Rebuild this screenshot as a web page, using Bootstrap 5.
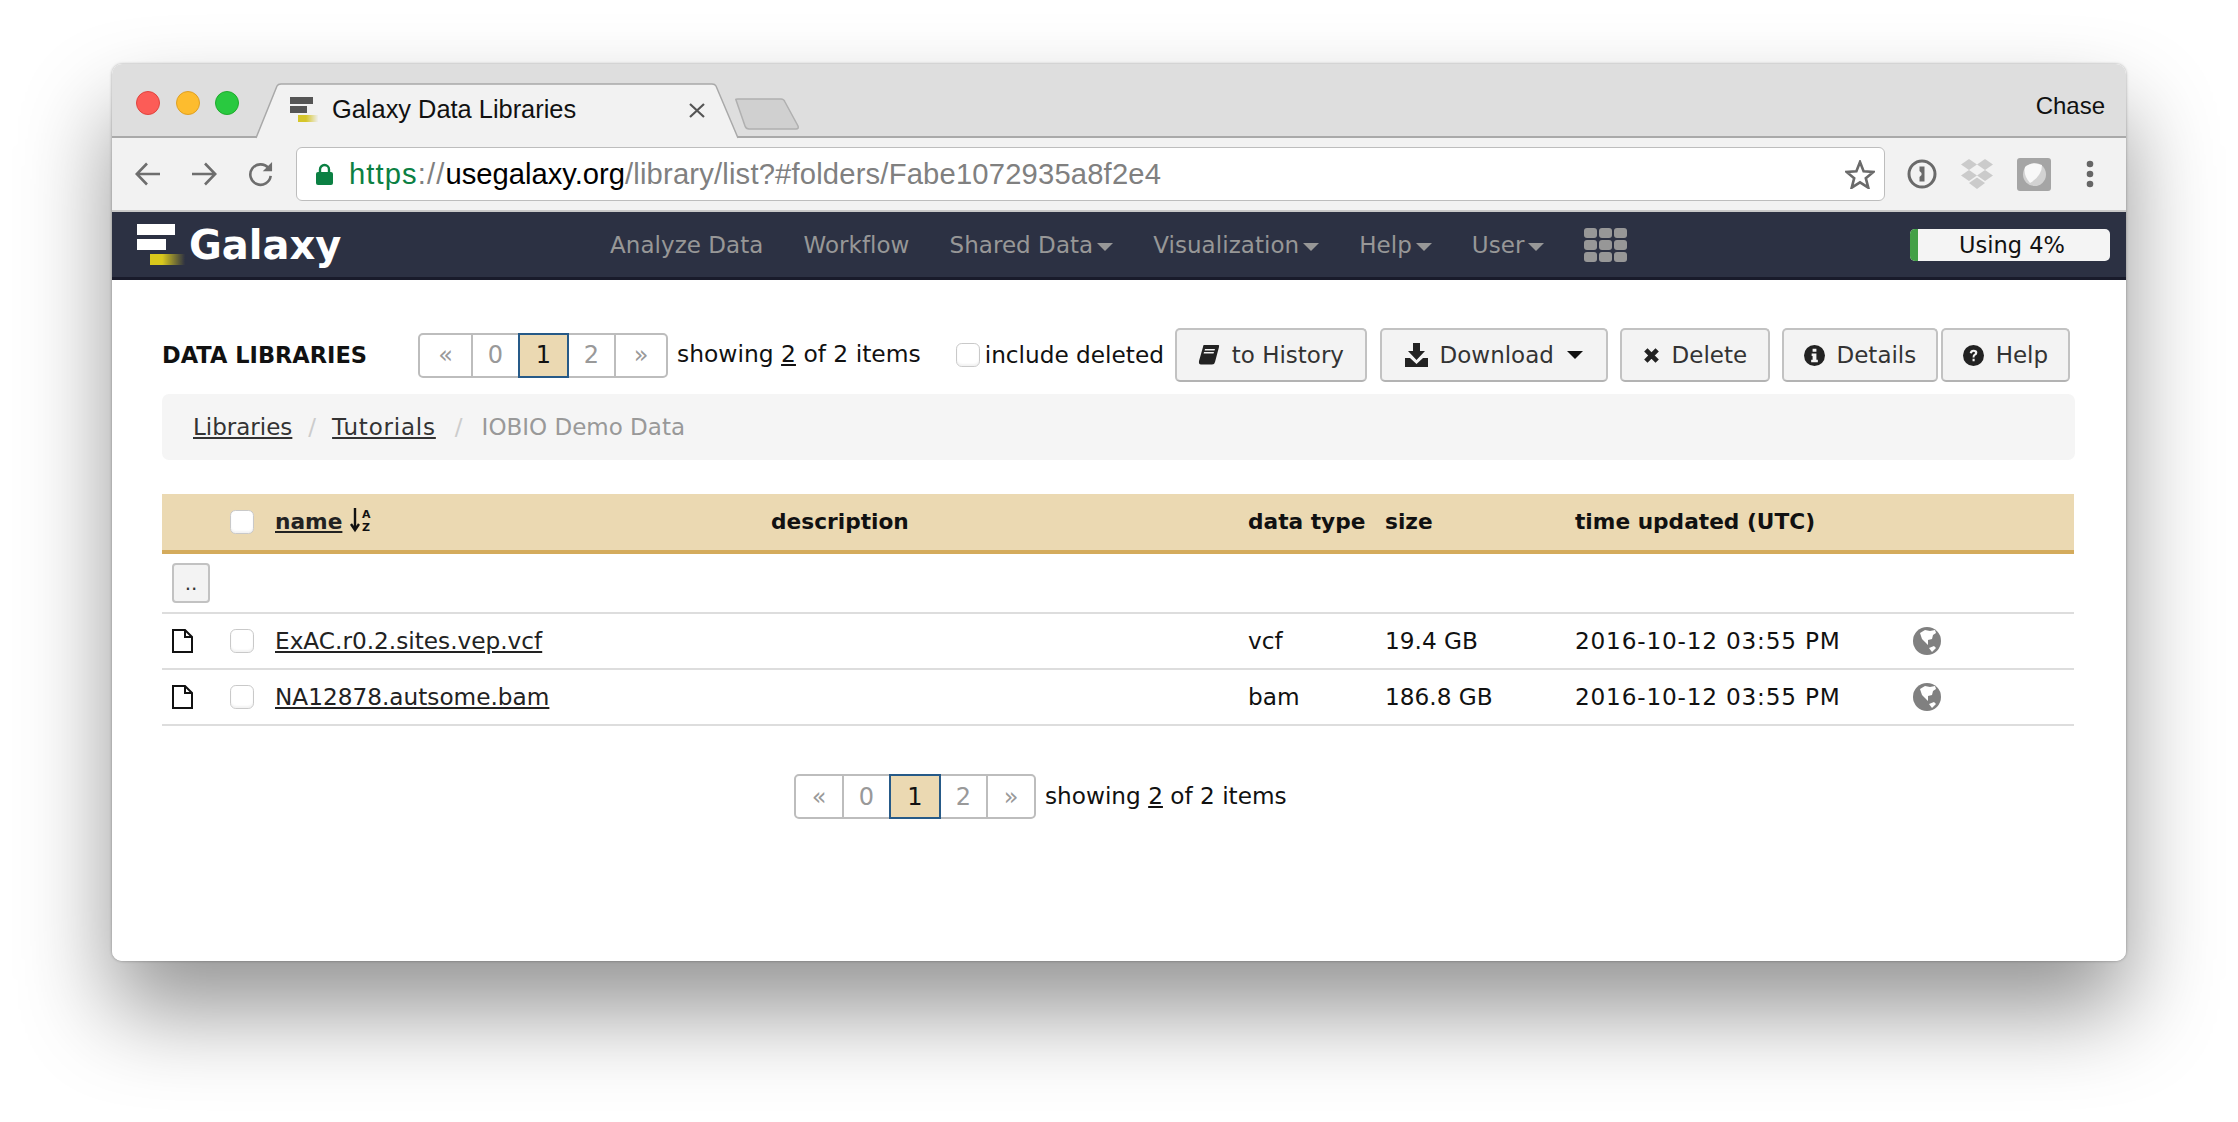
<!doctype html>
<html lang="en">
<head>
<meta charset="utf-8">
<title>Galaxy Data Libraries</title>
<link href="https://cdn.jsdelivr.net/npm/bootstrap@5.3.0/dist/css/bootstrap.min.css" rel="stylesheet">
<style>
html,body{background:#fff;margin:0;height:1122px;overflow:hidden}
body{padding:64px 0 0 112px;font-family:"DejaVu Sans",sans-serif;font-size:23.2px;color:#111}
.app-win{width:2014px;height:897px;border-radius:10px;background:#fff;overflow:hidden;display:flex;flex-direction:column}
.win-shadow{width:2014px;height:897px;border-radius:10px;box-shadow:0 50px 90px rgba(0,0,0,.42),0 0 3px rgba(0,0,0,.35)}
.tabbar{height:74px;background:#dedede;border-bottom:2px solid #a9a9a9;font-family:"Liberation Sans",sans-serif;flex:none}
.lights{gap:15.5px;padding:27px 0 0 24px;width:144px;align-self:flex-start}
.light{width:24px;height:24px;border-radius:50%;display:block}
.l-r{background:#fc5c57;border:1px solid #e0443e}.l-y{background:#fdbc2e;border:1px solid #dfa023}.l-g{background:#29c940;border:1px solid #1fab2d}
.tab-item{width:483px;height:55px;margin-top:19px;position:relative;margin-left:0;padding:0 0 2px 34px}
.tab-shape{position:absolute;left:0;top:0;width:483px;height:56px}
.tab-fav,.tab-name,.tab-close{position:relative}
.tab-name{font-size:25.4px;color:#111;margin-left:14px;width:356px;white-space:nowrap}
.tab-close{font-size:25px;color:#555;line-height:1}
.new-tab{margin:34px 0 0 -5px;width:66px;height:32px}
.who{font-size:24px;color:#111;margin:24px 21px 0 auto}
.urlbar{height:74px;background:#f2f2f2;border-bottom:2px solid #c9c9c9;padding:10px 0 10px 23px;flex:none}
.nav-ic{width:26px;height:26px;margin-right:30px;flex:none}
.omni{width:1589px;height:54px;margin-left:-7px;background:#fff;border:1.5px solid #bdbdbd;border-radius:6px;padding:0 9px 0 19px;font-family:"Liberation Sans",sans-serif;font-size:29.2px;color:#808080;flex:none}
.omni i{font-style:normal}
.u-g{color:#0b8043}.u-k{color:#000}
.u-sch{letter-spacing:1.1px}
.u-path{letter-spacing:.18px}
.u-all{padding-top:2px}
.ext{margin-left:23px;flex:none}
.gx-nav{height:68px;flex:none;background:#2c3143;border-bottom:3px solid #191b2b;padding:0 16px 0 25px;flex-wrap:nowrap}
.gx-brand{font-family:"DejaVu Sans",sans-serif;font-weight:700;font-size:40px;color:#fff;padding:0;margin:0;line-height:1;gap:4px;width:453px}
.gx-brand:hover{color:#fff}
.gx-menu{font-size:23px;flex-direction:row;letter-spacing:.05px;margin-top:2px}
.gx-menu .nav-link{color:#979797;padding:0 20px;white-space:nowrap}
.gx-menu .dropdown-toggle::after{border-top:8px solid;border-right:8px solid transparent;border-left:8px solid transparent;border-bottom:0;margin-left:4px;vertical-align:2px}
.gx-apps{margin-left:20px;display:grid;grid-template-columns:repeat(3,13px);gap:2px}
.gx-apps span{height:10px;background:#979797;border-radius:3px}
.quota{width:200px;height:32px;margin-left:auto;margin-right:0;background:#f4f4f4;border-radius:5px;color:#111;overflow:hidden;font-size:22.5px;line-height:32px;text-align:center}
.quota .progress-bar{width:8px;background:#43a047;flex:none}
.quota span{flex:1;padding-right:4px}
.page-body{flex:1;padding:48px 51px 0 50px}
.top-row{height:54px;margin-bottom:12px}
.sec-title{font-weight:700;font-size:22.5px;width:256px;margin:0;white-space:nowrap;color:#111}
.gx-pages{margin:0;--bs-pagination-font-size:24px}
.gx-pages .page-link{height:45px;padding:0;display:flex;align-items:center;justify-content:center;color:#999;background:#fff;border:2px solid #bdbdbd;margin-left:-2px!important;line-height:1}
.gx-pages .page-item:first-child .page-link{border-radius:5px 0 0 5px;margin-left:0!important}
.gx-pages .page-item:last-child .page-link{border-radius:0 5px 5px 0}
.gx-pages .page-item.active .page-link{background:#ebd9b2;border-color:#265a88;color:#111;z-index:3;position:relative}
.pw-a{width:55px}.pw-b{width:49px}.pw-c{width:51px}.pw-d{width:49px}.pw-e{width:54px}
.qw-a{width:50px}.qw-b{width:49px}.qw-c{width:52px}.qw-d{width:49px}.qw-e{width:50px}
.shown{margin-left:10px;white-space:nowrap}
.top-row .shown{font-size:23.4px;margin-left:9px}
.incl{margin-left:35px;gap:5px;white-space:nowrap;margin-right:11px;margin-top:1px}
.gx-check{width:24px;height:24px;margin:0;border:1.5px solid #c9c9c9;border-radius:6px;box-shadow:inset 0 -2px 2px rgba(0,0,0,.05);flex:none}
.gx-btn{--bs-btn-font-size:23px;height:54px;padding:0;background:#f3f3f3;border:2px solid #c2c2c2;border-bottom-color:#b3b3b3;border-radius:5px;color:#333;display:inline-flex;align-items:center;justify-content:center;white-space:nowrap;gap:12px;line-height:1}
.gx-btn:hover{background:#f3f3f3;color:#333;border-color:#c2c2c2}
.gx-btn svg{flex:none}
.gx-btn.dropdown-toggle::after{border-top:8px solid #111;border-right:8.5px solid transparent;border-left:8.5px solid transparent;border-bottom:0;margin-left:-6px;vertical-align:0}
.b-hist{width:192px;margin-right:13px}.b-dl{width:228px;margin-right:12px}.b-del{width:150px;margin-right:12px}.b-det{width:156px;margin-right:3px}.b-help{width:129px}
.crumbs-wrap{height:66px;background:#f5f5f5;border-radius:7px;padding:0 31px;margin-bottom:34px;width:1913px}
.gx-crumb{margin:0;font-size:23px}
.gx-crumb a{color:#333}
.crumb-wide{letter-spacing:.8px}
.gx-crumb .breadcrumb-item.active{color:#999}
.gx-crumb .breadcrumb-item+.breadcrumb-item{padding-left:16px}
.gx-crumb .breadcrumb-item+.breadcrumb-item::before{padding-right:16px;color:#ccc}
.gx-crumb .breadcrumb-item.active{padding-left:19px}
.gx-crumb .breadcrumb-item.active::before{padding-right:19px}
.gx-table{table-layout:fixed;width:1912px;margin:0;--bs-table-bg:transparent;font-size:23.2px;color:#111}
.gx-table th,.gx-table td{padding:0 10px;vertical-align:middle;white-space:nowrap;overflow:visible}
.gx-table thead th{background:#ebd9b2;height:58px;border-bottom:4px solid #d4ab5c;font-weight:700;font-size:21.7px;color:#111;box-shadow:none}
.gx-table tbody td{border-bottom:2px solid #ddd;height:56px}
.gx-table tbody tr:first-child td{height:61px}
.gx-table a{color:#222}
.when-cell{letter-spacing:.8px}
.up-btn{width:38px;height:40px;background:#f3f3f3;border:2px solid #c2c2c2;border-radius:4px;padding:0;font-size:20px;line-height:1;color:#333;margin-left:2px}
.sort-ic{margin-left:8px;vertical-align:-4px}
.page-foot{margin:48px 0 0 632px}
.page-foot .shown{margin-left:9px}
</style>
</head>
<body>
<div class="win-shadow">
<div class="app-win">
  <div class="tabbar d-flex align-items-start">
    <div class="lights d-flex"><span class="light l-r"></span><span class="light l-y"></span><span class="light l-g"></span></div>
    <div class="tab-item d-flex align-items-center">
      <svg class="tab-shape" viewBox="0 0 483 56"><path d="M0 55 L21 3 Q22 1 25 1 H456 Q459 1 460 3 L482 55" fill="#f2f2f2" stroke="#a9a9a9" stroke-width="1.5"/></svg>
      <svg class="tab-fav" width="28" height="25" viewBox="0 0 28 25"><rect x="0" y="0" width="23" height="7" fill="#555"/><rect x="0" y="9" width="17" height="7" fill="#555"/><defs><linearGradient id="fy"><stop offset=".4" stop-color="#d6c62a"/><stop offset="1" stop-color="#eee" /></linearGradient></defs><rect x="8" y="18" width="20" height="7" fill="url(#fy)"/></svg>
      <span class="tab-name">Galaxy Data Libraries</span>
      <svg class="tab-close" width="18" height="18" viewBox="0 0 18 18"><path d="M2 3 L16 16 M16 3 L2 16" stroke="#555" stroke-width="2.2" fill="none"/></svg>
    </div>
    <svg class="new-tab" viewBox="0 0 66 32"><path d="M2 2 Q1 1 4 1 H47 Q50 1 51 4 L64 28 Q65 31 62 31 H15 Q12 31 11 28 Z" fill="#d0d0d0" stroke="#b0b0b0" stroke-width="1.5"/></svg>
    <span class="who">Chase</span>
  </div>
  <div class="urlbar d-flex align-items-center">
    <svg class="nav-ic" viewBox="0 0 26 26"><path d="M25 13 H2 M12 2.5 L1.8 13 L12 23.5" fill="none" stroke="#6e6e6e" stroke-width="2.6"/></svg>
    <svg class="nav-ic" viewBox="0 0 26 26"><path d="M1 13 H24 M14 2.5 L24.2 13 L14 23.5" fill="none" stroke="#6e6e6e" stroke-width="2.6"/></svg>
    <svg class="nav-ic" viewBox="0 0 28 26"><path d="M23 6.5 A11 11 0 1 0 25.5 15" fill="none" stroke="#6e6e6e" stroke-width="2.8"/><path d="M17 10 H27 V0 Z" fill="#6e6e6e"/></svg>
    <div class="omni d-flex align-items-center">
      <svg width="17" height="22" viewBox="0 0 17 22" class="me-3 flex-none"><path d="M4 10 V6.5 a4.5 4.5 0 0 1 9 0 V10" fill="none" stroke="#0b8043" stroke-width="2.4"/><rect y="9" width="17" height="13" rx="2" fill="#0b8043"/></svg>
      <span class="u-all"><span class="u-sch"><i class="u-g">https</i>://</span><i class="u-k">usegalaxy.org</i><span class="u-path">/library/list?#folders/Fabe1072935a8f2e4</span></span>
      <svg width="30" height="29" viewBox="0 0 30 29" class="ms-auto"><path d="M15 2 L18.6 11.2 L28.4 11.9 L20.8 18.2 L23.3 27.7 L15 22.4 L6.7 27.7 L9.2 18.2 L1.6 11.9 L11.4 11.2 Z" fill="none" stroke="#6a6a6a" stroke-width="2.6" stroke-linejoin="miter"/></svg>
    </div>
    <svg class="ext" width="30" height="30" viewBox="0 0 30 30" style="margin-left:22px"><circle cx="15" cy="15" r="13" fill="#f2f2f2" stroke="#6a6a6a" stroke-width="3"/><path d="M12.5 7.5 H17.5 V22.5 H12.5 V18 L14.5 16 V14 L12.5 12 Z" fill="#6a6a6a"/></svg>
    <svg class="ext" width="34" height="32" viewBox="0 0 34 32"><path d="M9 1 L17 6.5 L9 12 L1 6.5 Z M25 1 L33 6.5 L25 12 L17 6.5 Z M9 12 L17 17.5 L9 23 L1 17.5 Z M25 12 L33 17.5 L25 23 L17 17.5 Z M17 19.5 L25 25 L17 31 L9 25 Z" fill="#cbcbcb"/></svg>
    <svg class="ext" width="34" height="33" viewBox="0 0 34 33"><rect width="34" height="33" rx="3" fill="#a5a5a5"/><circle cx="17.5" cy="16.5" r="11.5" fill="#d2d2d2"/><path d="M8 9 Q15 3 25 7 Q25 18 13 25 Q6 17 8 9 Z" fill="#f8f8f8"/></svg>
    <svg class="ext" width="8" height="28" viewBox="0 0 8 28" style="margin-left:35px"><circle cx="4" cy="4" r="3.3" fill="#666"/><circle cx="4" cy="14" r="3.3" fill="#666"/><circle cx="4" cy="24" r="3.3" fill="#666"/></svg>
  </div>
  <nav class="navbar gx-nav d-flex align-items-center">
    <a class="navbar-brand gx-brand d-flex align-items-center" href="#">
      <svg width="48" height="42" viewBox="0 0 48 42"><defs><linearGradient id="by"><stop offset=".35" stop-color="#d9c81e"/><stop offset="1" stop-color="#2c3143"/></linearGradient><filter id="sf"><feGaussianBlur stdDeviation=".6"/></filter></defs><g filter="url(#sf)"><rect x="0" y="0" width="38" height="11" fill="#fff"/><rect x="0" y="15" width="29" height="11" fill="#fff"/><rect x="13" y="30" width="35" height="11" fill="url(#by)"/></g></svg>
      <span>Galaxy</span>
    </a>
    <ul class="navbar-nav gx-menu d-flex">
      <li class="nav-item"><a class="nav-link" href="#">Analyze Data</a></li>
      <li class="nav-item"><a class="nav-link" href="#">Workflow</a></li>
      <li class="nav-item"><a class="nav-link dropdown-toggle" href="#">Shared Data</a></li>
      <li class="nav-item"><a class="nav-link dropdown-toggle" href="#">Visualization</a></li>
      <li class="nav-item"><a class="nav-link dropdown-toggle" href="#">Help</a></li>
      <li class="nav-item"><a class="nav-link dropdown-toggle" href="#">User</a></li>
    </ul>
    <div class="gx-apps"><span></span><span></span><span></span><span></span><span></span><span></span><span></span><span></span><span></span></div>
    <div class="quota progress d-flex"><div class="progress-bar"></div><span>Using 4%</span></div>
  </nav>
  <main class="page-body">
    <div class="top-row d-flex align-items-center">
      <h1 class="sec-title">DATA LIBRARIES</h1>
      <ul class="pagination gx-pages">
        <li class="page-item"><a class="page-link pw-a" href="#">«</a></li>
        <li class="page-item"><a class="page-link pw-b" href="#">0</a></li>
        <li class="page-item active"><a class="page-link pw-c" href="#">1</a></li>
        <li class="page-item"><a class="page-link pw-d" href="#">2</a></li>
        <li class="page-item"><a class="page-link pw-e" href="#">»</a></li>
      </ul>
      <span class="shown">showing <u>2</u> of 2 items</span>
      <label class="incl d-flex align-items-center"><input class="form-check-input gx-check" type="checkbox">include deleted</label>
      <button class="btn gx-btn b-hist" type="button"><svg width="22" height="22" viewBox="0 0 22 22"><path d="M6 1 H20.5 Q21.5 1 21 3 L17 18 Q16.5 20.5 14 20.5 H3 Q.5 20.5 1 17 L5 3 Q5 1 6 1 Z M7 5 L6.6 6.5 H16.5 L17 5 Z M6 8 L5.6 9.5 H15.5 L16 8 Z" fill="#222" fill-rule="evenodd"/></svg>to History</button>
      <button class="btn gx-btn b-dl dropdown-toggle" type="button"><svg width="23" height="24" viewBox="0 0 23 24"><path d="M8 0 H15 V8 H20 L11.5 17 L3 8 H8 Z M0 15 H5 L11.5 21 L18 15 H23 V24 H0 Z" fill="#222"/></svg>Download&nbsp;</button>
      <button class="btn gx-btn b-del" type="button"><svg width="17" height="17" viewBox="0 0 18 18"><path d="M3 3 L15 15 M15 3 L3 15" stroke="#222" stroke-width="5" fill="none"/></svg>Delete</button>
      <button class="btn gx-btn b-det" type="button"><svg width="21" height="21" viewBox="0 0 22 22"><circle cx="11" cy="11" r="11" fill="#222"/><path d="M9 4 H13 V7 H9 Z M8 9 H13 V15.5 H14.5 V18 H7.5 V15.5 H9 V11.5 H8 Z" fill="#f3f3f3"/></svg>Details</button>
      <button class="btn gx-btn b-help" type="button"><svg width="21" height="21" viewBox="0 0 22 22"><circle cx="11" cy="11" r="11" fill="#222"/><path d="M7 8.5 Q7.5 5 11 5 Q15 5 15 8 Q15 10 13 11 Q12 11.7 12 13 H10 Q10 10.5 11.5 9.5 Q12.8 8.6 12.6 8 Q12.3 7 11 7 Q9.7 7 9.3 9 Z M10 14.5 H12.2 V17 H10 Z" fill="#f3f3f3"/></svg>Help</button>
    </div>
    <div class="crumbs-wrap d-flex align-items-center">
      <ol class="breadcrumb gx-crumb">
        <li class="breadcrumb-item"><a href="#">Libraries</a></li>
        <li class="breadcrumb-item"><a class="crumb-wide" href="#">Tutorials</a></li>
        <li class="breadcrumb-item active">IOBIO Demo Data</li>
      </ol>
    </div>
    <table class="table gx-table">
      <colgroup><col style="width:58px"><col style="width:45px"><col style="width:496px"><col style="width:477px"><col style="width:137px"><col style="width:190px"><col style="width:340px"><col style="width:169px"></colgroup>
      <thead><tr>
        <th></th>
        <th><input class="form-check-input gx-check d-block" type="checkbox"></th>
        <th><a href="#">name</a><svg class="sort-ic" width="22" height="26" viewBox="0 0 22 26"><path d="M5 1 V21 M1 17 L5 23 L9 17" fill="none" stroke="#111" stroke-width="2.4"/><text x="12" y="11" font-size="11" font-weight="700" font-family="DejaVu Sans" fill="#111">A</text><text x="12" y="24" font-size="11" font-weight="700" font-family="DejaVu Sans" fill="#111">Z</text></svg></th>
        <th>description</th><th>data type</th><th>size</th><th>time updated (UTC)</th><th></th>
      </tr></thead>
      <tbody>
        <tr><td class="ps-2"><button class="btn up-btn" type="button">..</button></td><td colspan="7"></td></tr>
        <tr>
          <td><svg width="21" height="24" viewBox="0 0 21 24" class="d-block"><path d="M1 1 H13 L20 8 V23 H1 Z M13 1 V8 H20" fill="#fff" stroke="#111" stroke-width="2"/></svg></td>
          <td><input class="form-check-input gx-check d-block" type="checkbox"></td>
          <td><a href="#">ExAC.r0.2.sites.vep.vcf</a></td><td></td><td>vcf</td><td>19.4 GB</td><td class="when-cell">2016-10-12 03:55 PM</td>
          <td class="ps-2"><svg width="28" height="28" viewBox="0 0 28 28" class="d-block"><circle cx="14" cy="14" r="14" fill="#808080"/><path d="M7 6 L12 3 L17 4 L22 3 L23 6 L20 8 L19 12 L15 13 L15 18 L12 15 L9 12 Z M16 21 L21 19 L23 21 L19 25 Z" fill="#fff"/></svg></td>
        </tr>
        <tr>
          <td><svg width="21" height="24" viewBox="0 0 21 24" class="d-block"><path d="M1 1 H13 L20 8 V23 H1 Z M13 1 V8 H20" fill="#fff" stroke="#111" stroke-width="2"/></svg></td>
          <td><input class="form-check-input gx-check d-block" type="checkbox"></td>
          <td><a href="#">NA12878.autsome.bam</a></td><td></td><td>bam</td><td>186.8 GB</td><td class="when-cell">2016-10-12 03:55 PM</td>
          <td class="ps-2"><svg width="28" height="28" viewBox="0 0 28 28" class="d-block"><circle cx="14" cy="14" r="14" fill="#808080"/><path d="M7 6 L12 3 L17 4 L22 3 L23 6 L20 8 L19 12 L15 13 L15 18 L12 15 L9 12 Z M16 21 L21 19 L23 21 L19 25 Z" fill="#fff"/></svg></td>
        </tr>
      </tbody>
    </table>
    <div class="page-foot d-flex align-items-center">
      <ul class="pagination gx-pages">
        <li class="page-item"><a class="page-link qw-a" href="#">«</a></li>
        <li class="page-item"><a class="page-link qw-b" href="#">0</a></li>
        <li class="page-item active"><a class="page-link qw-c" href="#">1</a></li>
        <li class="page-item"><a class="page-link qw-d" href="#">2</a></li>
        <li class="page-item"><a class="page-link qw-e" href="#">»</a></li>
      </ul>
      <span class="shown">showing <u>2</u> of 2 items</span>
    </div>
  </main>
</div>
</div>
<script src="https://cdn.jsdelivr.net/npm/bootstrap@5.3.0/dist/js/bootstrap.bundle.min.js"></script>
</body>
</html>
